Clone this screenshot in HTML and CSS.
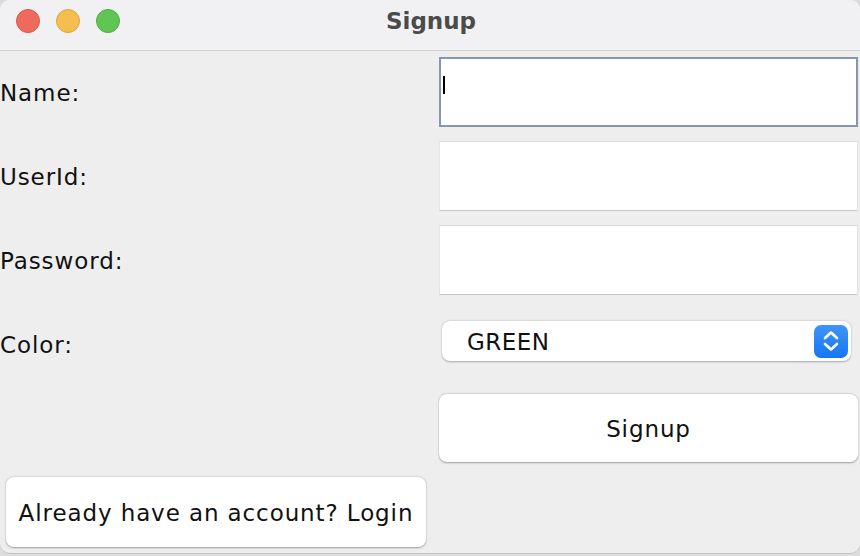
FILE: index.html
```html
<!DOCTYPE html>
<html>
<head>
<meta charset="utf-8">
<link rel="stylesheet" href="styles.css">
</head>
<body>
<div class="window">
  <div class="titlebar">
    <div class="lights">
      <span class="light red"></span>
      <span class="light yellow"></span>
      <span class="light green"></span>
    </div>
    <div class="title">Signup</div>
  </div>
  <div class="form">
    <div class="label">Name:</div>
    <div class="field focused"><span class="caret"></span></div>
    <div class="label">UserId:</div>
    <div class="field"></div>
    <div class="label">Password:</div>
    <div class="field"></div>
    <div class="label">Color:</div>
    <div class="combo">
      <span class="combo-text">GREEN</span>
      <span class="combo-btn">
        <svg width="20" height="26" viewBox="0 0 20 26"><path d="M4 10 L10 4.5 L16 10" fill="none" stroke="#fff" stroke-width="2.6" stroke-linecap="round" stroke-linejoin="round"/><path d="M4 16 L10 21.5 L16 16" fill="none" stroke="#fff" stroke-width="2.6" stroke-linecap="round" stroke-linejoin="round"/></svg>
      </span>
    </div>
    <div class="label"></div>
    <div class="button signup">Signup</div>
    <div class="button login">Already have an account? Login</div>
    <div></div>
  </div>
</div>
</body>
</html>
```
FILE: styles.css
```css
* { box-sizing: border-box; }
html, body {
  margin: 0;
  padding: 0;
  width: 860px;
  height: 556px;
  background: #dcdcdc;
  overflow: hidden;
  font-family: "DejaVu Sans", "Liberation Sans", sans-serif;
}
.window {
  width: 860px;
  height: 554px;
  background: #eeeeee;
  border-radius: 10px;
  overflow: hidden;
  border-bottom: 1px solid #c4c4c4;
}
.titlebar {
  height: 51px;
  background: #f1f1f3;
  border-bottom: 1px solid #d2d2d2;
  display: flex;
  align-items: center;
  position: relative;
}
.lights {
  display: flex;
  gap: 16px;
  padding-left: 16px;
  margin-top: -8px;
}
.light {
  width: 24px;
  height: 24px;
  border-radius: 50%;
  display: block;
}
.red { background: #ef6a5e; border: 1px solid #d9574c; }
.yellow { background: #f6be4f; border: 1px solid #dfa43a; }
.green { background: #61c554; border: 1px solid #4fae43; }
.title {
  position: absolute;
  left: 0;
  right: 0;
  top: 8px;
  text-align: center;
  font-weight: bold;
  font-size: 23px;
  color: #4b4b4b;
  padding-left: 2px;
}
.form {
  display: grid;
  grid-template-columns: 439px 419px;
  grid-auto-rows: 70px;
  row-gap: 14px;
  padding-top: 6px;
}
.label {
  display: flex;
  align-items: center;
  font-size: 23px;
  letter-spacing: 0.9px;
  color: #111;
  padding-top: 2px;
}
.field {
  background: #fff;
  border-top: 1px solid #dedede;
  border-left: 1px solid #e4e4e4;
  border-right: 1px solid #e4e4e4;
  border-bottom: 1px solid #c6c6c6;
  display: flex;
  align-items: center;
  padding-left: 3px;
}
.field.focused {
  border: 2px solid #8796ab;
  padding-left: 2px;
}
.caret {
  display: block;
  width: 2px;
  height: 18px;
  background: #000;
  margin-top: -14px;
}
.combo {
  align-self: start;
  margin: 12px 7px 0 3px;
  height: 40px;
  background: #fff;
  border-radius: 8px;
  box-shadow: 0 0.5px 2px rgba(0,0,0,0.3);
  display: flex;
  align-items: center;
  justify-content: space-between;
  padding: 0 3px 0 25px;
}
.combo-text {
  font-size: 23px;
  letter-spacing: 0.5px;
  color: #111;
  padding-top: 2px;
}
.combo-btn {
  width: 34px;
  height: 33px;
  border-radius: 7px;
  background: linear-gradient(#3e94fb, #1676f2);
  display: flex;
  align-items: center;
  justify-content: center;
}
.button {
  background: #fff;
  border-radius: 8px;
  box-shadow: 0 0.5px 2px rgba(0,0,0,0.35);
  display: flex;
  align-items: center;
  justify-content: center;
  font-size: 23px;
  letter-spacing: 0.9px;
  color: #111;
}
.signup {
  margin: 1px 0 1px 0;
  padding-top: 2px;
}
.login {
  margin: 0 13px 0 6px;
  padding-top: 2px;
}
```
